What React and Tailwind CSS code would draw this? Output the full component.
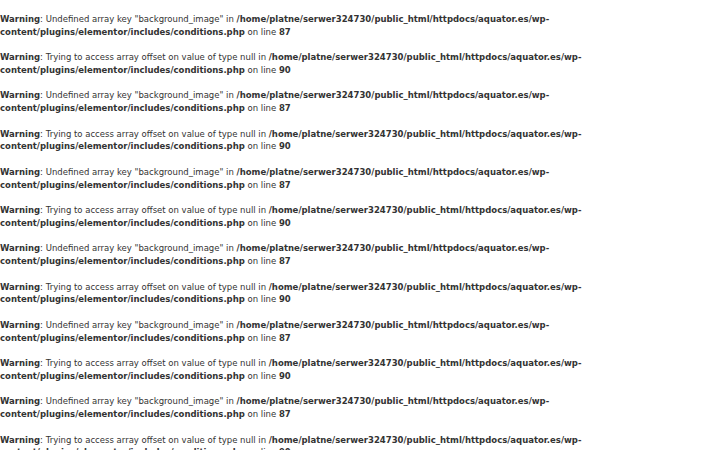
import React from "react";

const blocks = [];
for (let i = 0; i < 12; i++) blocks.push(i % 2 === 0 ? "a" : "b");

export default function App() {
  return (
    <div className="bg-white text-[#333] text-[8.5px] leading-[12.75px] font-['DejaVu_Sans',sans-serif] min-h-[450px]">
      {blocks.map((k, i) => (
        <React.Fragment key={i}>
          <br />
          <b>Warning</b>:{" "}
          {k === "a"
            ? 'Undefined array key "background_image" in '
            : "Trying to access array offset on value of type null in "}
          <b>/home/platne/serwer324730/public_html/httpdocs/aquator.es/wp-content/plugins/elementor/includes/conditions.php</b> on line <b>{k === "a" ? "87" : "90"}</b>
          <br />
        </React.Fragment>
      ))}
    </div>
  );
}
